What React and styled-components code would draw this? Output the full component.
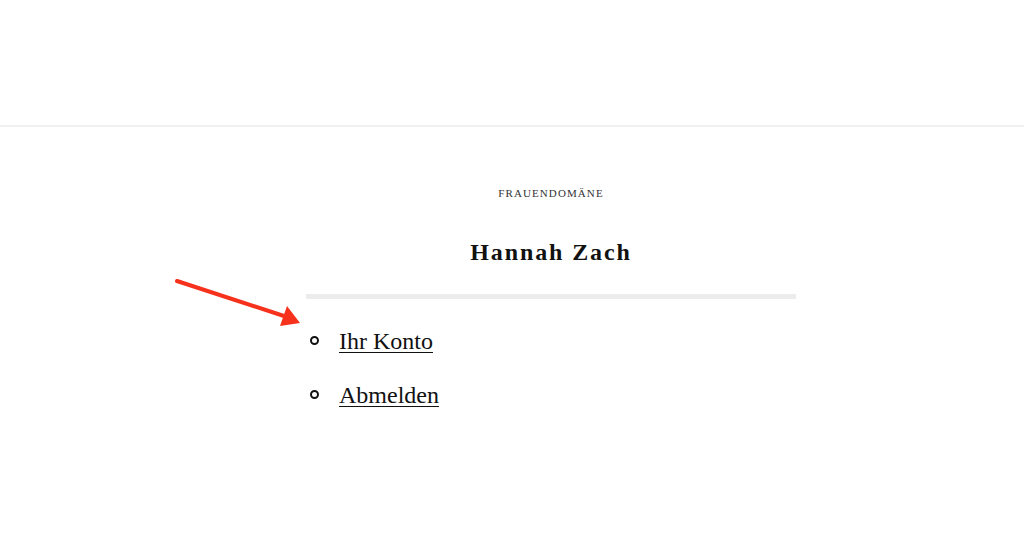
import React from 'react';
import styled, { createGlobalStyle } from 'styled-components'

const Global = createGlobalStyle`
body{
    margin: 0;
    background: #fff;
    font-family: "Liberation Serif", "DejaVu Serif", serif;
    color: #111;
}
`

function Arrow(){
    return(
        <ArrowSvg width="140" height="60" viewBox="0 0 140 60">
            <line x1="2" y1="4" x2="112" y2="40" stroke="#f7321c" strokeWidth="4" strokeLinecap="round"/>
            <polygon points="125,46 105,49 112,29" fill="#f7321c"/>
        </ArrowSvg>
    )
}

function App(){
    return(
        <Page>
            <Global/>
            <Header/>
            <Body>
                <Main>
                    <Brand>Frauendomäne</Brand>
                    <Name>Hannah Zach</Name>
                    <Divider/>
                    <Menu>
                        <li><a href="#">Ihr Konto</a></li>
                        <li><a href="#">Abmelden</a></li>
                    </Menu>
                </Main>
            </Body>
            <Arrow/>
        </Page>
    )
}
export default App

const Page = styled.div`
position: relative;
width: 100%;
height: 547px;
overflow: hidden;
`

const Header = styled.header`
height: 125px;
border-bottom: 2px solid #f0f0f0;
`

const Body = styled.div`
padding-left: 78px;
`

const Main = styled.main`
width: 490px;
margin: 0 auto;
padding-top: 58px;
display: flex;
flex-direction: column;
align-items: center;
`

const Brand = styled.div`
font-size: 11px;
text-transform: uppercase;
letter-spacing: 1.1px;
color: #333;
line-height: 16px;
`

const Name = styled.h1`
margin: 36px 0 0;
font-size: 24px;
font-weight: bold;
letter-spacing: 1.9px;
line-height: 30px;
`

const Divider = styled.div`
align-self: stretch;
height: 5px;
background: #ececec;
margin-top: 27px;
`

const Menu = styled.ul`
align-self: stretch;
list-style: none;
margin: 27px 0 0;
padding: 0;

li{
    display: flex;
    align-items: center;
    gap: 20px;
    height: 30px;
    margin-bottom: 24px;
}
li::before{
    content: "";
    box-sizing: border-box;
    width: 9px;
    height: 9px;
    border: 2px solid #111;
    border-radius: 50%;
    margin-left: 4px;
    margin-top: -2px;
}
a{
    color: #111;
    font-size: 24px;
    text-decoration: underline;
    text-decoration-thickness: 1px;
    text-underline-offset: 3px;
}
`

const ArrowSvg = styled.svg`
position: absolute;
left: 175px;
top: 277px;
`
